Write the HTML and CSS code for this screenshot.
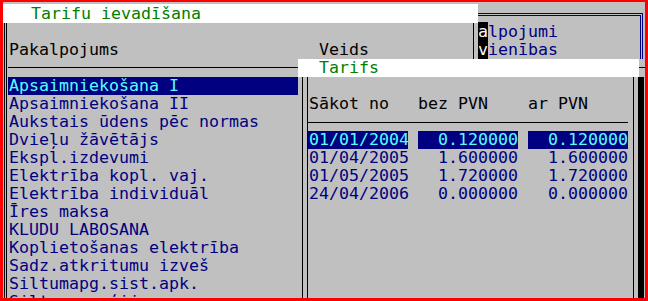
FILE: index.html
```html
<!DOCTYPE html>
<html lang="lv">
<head>
<meta charset="utf-8">
<title>Tarifu ievadīšana</title>
<link rel="stylesheet" href="styles.css">
</head>
<body>
<div class="screen">
  <div class="main-title">Tarifu ievadīšana</div>

  <div class="main-win">
    <div class="hdr"><span>Pakalpojums</span><span>Veids</span></div>
    <div class="hdr-line"></div>
    <ul class="list">
      <li class="sel">Apsaimniekošana I</li>
      <li>Apsaimniekošana II</li>
      <li>Aukstais ūdens pēc normas</li>
      <li>Dvieļu žāvētājs</li>
      <li>Ekspl.izdevumi</li>
      <li>Elektrība kopl. vaj.</li>
      <li>Elektrība individuāl</li>
      <li>Īres maksa</li>
      <li>KLUDU LABOSANA</li>
      <li>Koplietošanas elektrība</li>
      <li>Sadz.atkritumu izveš</li>
      <li>Siltumapg.sist.apk.</li>
      <li>Siltumenerģija</li>
    </ul>
  </div>

  <div class="side-win">
    <div class="side-row"><span class="inv">a</span>lpojumi</div>
    <div class="side-row"><span class="inv">v</span>ienības</div>
  </div>

  <div class="tw">
    <div class="tw-title">Tarifs</div>
    <div class="tw-body">
      <div class="tw-grid tw-head">
        <span>Sākot no</span><span>bez PVN</span><span>ar PVN</span>
      </div>
      <div class="tw-line"></div>
      <div class="tw-grid tw-row sel">
        <span class="d">01/01/2004</span><span class="n">0.120000</span><span class="n">0.120000</span>
      </div>
      <div class="tw-grid tw-row">
        <span class="d">01/04/2005</span><span class="n">1.600000</span><span class="n">1.600000</span>
      </div>
      <div class="tw-grid tw-row">
        <span class="d">01/05/2005</span><span class="n">1.720000</span><span class="n">1.720000</span>
      </div>
      <div class="tw-grid tw-row">
        <span class="d">24/04/2006</span><span class="n">0.000000</span><span class="n">0.000000</span>
      </div>
    </div>
  </div>
</div>
</body>
</html>
```

FILE: styles.css
```css
* { box-sizing: border-box; }

body {
  margin: 0;
  background: #c0c0c0;
}

.screen {
  position: relative;
  width: 648px;
  height: 301px;
  overflow: hidden;
  background: #c0c0c0;
  font-family: "DejaVu Sans Mono", monospace;
  font-size: 16.61px;
  line-height: 18px;
  color: #000080;
}

/* red frame of the captured window */
.screen::after {
  content: "";
  position: absolute;
  inset: 0;
  border-style: solid;
  border-color: #ff0000;
  border-width: 2px 3px 3px 3px;
  z-index: 10;
  pointer-events: none;
}

/* ---- main window title ---- */
.main-title {
  position: absolute;
  left: 3px;
  top: 4px;
  width: 475px;
  height: 19px;
  line-height: 19px;
  padding-left: 28px;
  background: #ffffff;
  color: #008000;
  white-space: pre;
}

/* ---- main window ---- */
.main-win {
  position: absolute;
  left: 4px;
  top: 23px;
  right: 0;
  bottom: -30px;
  border-left: 3px double #000;
  padding: 18px 0 0 1px;
  z-index: 1;
}

.hdr {
  display: grid;
  grid-template-columns: 310px auto;
  height: 18px;
  color: #000;
  padding-left: 1px;
}

.hdr-line {
  height: 1px;
  background: #000;
  margin: 8px 0 9px;
}

.list {
  list-style: none;
  margin: 0;
  padding: 0;
}

.list li {
  width: 290px;
  height: 18px;
  padding-left: 1px;
  white-space: pre;
}

.list li.sel {
  background: #000080;
  color: #55ffff;
}

/* ---- small window behind (top right) ---- */
.side-win {
  position: absolute;
  left: 478px;
  top: 13px;
  width: 165px;
  height: 46px;
  border-top: 3px double #000080;
  border-right: 3px double #000080;
  padding-top: 7px;
  z-index: 2;
}

.side-win::before {
  content: "";
  position: absolute;
  left: -5px;
  top: 7px;
  width: 4px;
  height: 36px;
  border-left: 1px solid #000;
  border-right: 1px solid #000;
}

.side-row {
  height: 18px;
  white-space: pre;
}

.inv {
  background: #000;
  color: #ffffff;
}

/* ---- Tarifs window ---- */
.tw {
  position: absolute;
  left: 298px;
  top: 59px;
  width: 346px;
  bottom: -30px;
  z-index: 3;
}

.tw::after {
  content: "";
  position: absolute;
  left: 341px;
  top: 18px;
  width: 5px;
  bottom: 0;
  background: #000;
}

.tw-title {
  width: 341px;
  height: 18px;
  padding-left: 21px;
  background: #ffffff;
  color: #008000;
}

.tw-body {
  position: relative;
  width: 340px;
  height: 260px;
  background: #c0c0c0;
  padding: 18px 0 0 10px;
}

.tw-body::before,
.tw-body::after {
  content: "";
  position: absolute;
  top: 0;
  bottom: 0;
  width: 4px;
  border-left: 1px solid #000;
  border-right: 1px solid #000;
}

.tw-body::before { left: 4px; }
.tw-body::after { left: 335px; }

.tw-grid {
  display: grid;
  grid-template-columns: 100px 100px 100px;
  column-gap: 10px;
  height: 18px;
  white-space: pre;
}

.tw-head {
  color: #000;
  padding-left: 1px;
}

.tw-head span + span { margin-left: -1px; }

.tw-line {
  width: 320px;
  height: 1px;
  background: #000;
  margin: 9px 0 8px;
}

.tw-row .d { padding-left: 1px; }
.tw-row .n { text-align: right; }

.tw-row.sel span {
  background: #000080;
  color: #55ffff;
}
```
